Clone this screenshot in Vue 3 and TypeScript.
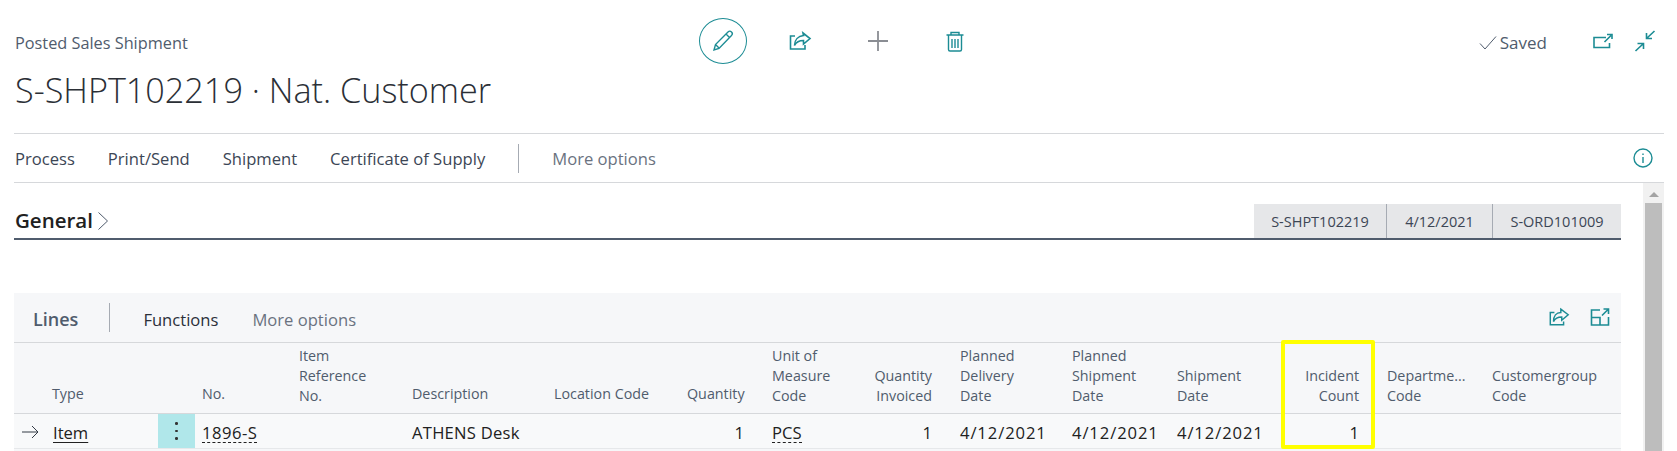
<script setup lang="ts">
interface Col { key: string; lines: string[]; right?: boolean; single?: boolean }
const columns: Col[] = [
  { key: 'type', lines: ['Type'], single: true },
  { key: 'menu', lines: [] },
  { key: 'no', lines: ['No.'], single: true },
  { key: 'ref', lines: ['Item', 'Reference', 'No.'] },
  { key: 'desc', lines: ['Description'], single: true },
  { key: 'loc', lines: ['Location Code'], single: true },
  { key: 'qty', lines: ['Quantity'], right: true, single: true },
  { key: 'unit', lines: ['Unit of', 'Measure', 'Code'] },
  { key: 'inv', lines: ['Quantity', 'Invoiced'], right: true },
  { key: 'pdd', lines: ['Planned', 'Delivery', 'Date'] },
  { key: 'psd', lines: ['Planned', 'Shipment', 'Date'] },
  { key: 'sd', lines: ['Shipment', 'Date'] },
  { key: 'inc', lines: ['Incident', 'Count'], right: true },
  { key: 'dept', lines: ['Departme...', 'Code'] },
  { key: 'cust', lines: ['Customergroup', 'Code'] },
]
const navItems = ['Process', 'Print/Send', 'Shipment', 'Certificate of Supply']
const tags = ['S-SHPT102219', '4/12/2021', 'S-ORD101009']
</script>

<template>
  <div class="page">
    <header class="top">
      <div class="heading">
        <div class="sub">Posted Sales Shipment</div>
        <h1 class="title">S-SHPT102219 · Nat. Customer</h1>
      </div>
      <div class="actions">
        <div class="act">
          <div class="circle">
            <svg width="24" height="24" viewBox="0 0 24 24" class="teal"><path d="M3 21l1.500-5.500L17 3c1-1 2.500-1 3.500 0s1 2.500 0 3.500L8 19.500 3 21zM4.500 15.500l4 4M15 5l4 4"/></svg>
          </div>
        </div>
        <div class="act">
          <svg width="24" height="24" viewBox="0 0 24 24" class="teal bold"><path d="M7 7H2.500V20H17v-4"/><path d="M15 4l7 5.500-6.500 5.500v-3.500c-4 0-7 1-9 5 0-6 4-9.500 9-10z"/></svg>
        </div>
        <div class="act">
          <svg width="24" height="24" viewBox="0 0 24 24" class="grey"><path d="M12 2v20M2 12h20"/></svg>
        </div>
        <div class="act">
          <svg width="24" height="24" viewBox="0 0 24 24" class="teal"><path d="M3.500 6h17M8 6V3.500h8V6M5.500 6v14.500c0 .8.500 1.500 1.500 1.500h10c1 0 1.500-.7 1.500-1.500V6M9 10v9M12 10v9M15 10v9"/></svg>
        </div>
      </div>
      <div class="status">
        <svg width="18" height="16" viewBox="0 0 18 16" class="thin"><path d="M1 8.500l5 5.500L17 1.500"/></svg>
        <span class="saved">Saved</span>
        <svg width="20" height="16" viewBox="0 0 20 16" class="teal bold st-a"><path d="M13 4.500H1v10h15.500V10M11.500 9L18 2.500M14 1.500h5V6"/></svg>
        <svg width="22" height="22" viewBox="0 0 22 22" class="teal bold st-b"><path d="M20.500 1L12.500 8.500M12.500 3v5.500H18M1.500 21L9.500 13.500M3.500 13.500h6V19"/></svg>
      </div>
    </header>

    <nav class="nav">
      <span v-for="n in navItems" :key="n" class="nav-item">{{ n }}</span>
      <span class="nav-sep"></span>
      <span class="nav-more">More options</span>
      <svg class="info teal" width="20" height="20" viewBox="0 0 20 20"><circle cx="10" cy="10" r="9"/><path d="M10 9v6M10 5.500v1.500"/></svg>
    </nav>

    <div class="body">
      <main class="content">
        <section class="general">
          <h2 class="gen-title">General</h2>
          <svg width="12" height="20" viewBox="0 0 12 20" class="thin chev"><path d="M1.500 1.500L10.500 10 1.500 18.500"/></svg>
          <div class="tags">
            <span v-for="t in tags" :key="t" class="tag">{{ t }}</span>
          </div>
        </section>

        <section class="lines">
          <div class="lines-bar">
            <span class="lines-title">Lines</span>
            <span class="lines-sep"></span>
            <span class="lines-fn">Functions</span>
            <span class="lines-more">More options</span>
            <svg class="teal bold bar-i1" width="22" height="22" viewBox="0 0 24 24"><path d="M7 7H2.500V20.500H17V17"/><path d="M14 3.500l8 6-7 6v-3.500c-4 0-7 1-9 5 0-6 3-10 8-10z"/></svg>
            <svg class="teal bold bar-i2" width="20" height="18" viewBox="0 0 20 18"><path d="M10 2H1.500v15h17V9M1.500 9.500h8.500V17M12 7.500L18 1.500M13.500 1h5v5"/></svg>
          </div>
          <div class="row head">
            <div v-for="c in columns" :key="c.key" class="cell" :class="{ right: c.right, single: c.single }">
              <div v-for="l in c.lines" :key="l">{{ l }}</div>
            </div>
          </div>
          <div class="row data">
            <div class="cell type-cell">
              <svg width="18" height="14" viewBox="0 0 18 14" class="thin dark"><path d="M1 7h16M11 1l6 6-6 6"/></svg>
              <span class="link">Item</span>
            </div>
            <div class="menu-cell"><span class="dot"></span><span class="dot"></span><span class="dot"></span></div>
            <div class="cell"><span class="dash code">1896-S</span></div>
            <div class="cell"></div>
            <div class="cell wide">ATHENS Desk</div>
            <div class="cell"></div>
            <div class="cell right">1</div>
            <div class="cell"><span class="dash">PCS</span></div>
            <div class="cell right">1</div>
            <div class="cell date">4/12/2021</div>
            <div class="cell date">4/12/2021</div>
            <div class="cell date">4/12/2021</div>
            <div class="cell right">1</div>
            <div class="cell"></div>
            <div class="cell"></div>
          </div>
          <div class="marker"></div>
        </section>
      </main>
      <aside class="scroll">
        <span class="arrow"></span>
        <span class="thumb"></span>
      </aside>
    </div>
  </div>
</template>

<style>
html, body { background: #fff; }
</style>

<style scoped>
.page {
  width: 1677px;
  height: 451px;
  overflow: hidden;
  background: #fff;
  font-family: "Open Sans", "Noto Sans", sans-serif;
  color: #212121;
  position: relative;
}
svg { fill: none; stroke-width: 1.4; display: block; flex-shrink: 0; }
.teal { stroke: #1c8c94; }
.bold { stroke-width: 1.6; }
.grey { stroke: #8a8d93; stroke-width: 1.8; }
.thin { stroke: #505c6d; stroke-width: 1; }
.dark { stroke: #333a45; }

.top {
  height: 133px;
  margin: 0 13px 0 14px;
  display: flex;
  border-bottom: 1px solid #d6d8db;
}
.heading { width: 670px; padding-left: 1px; box-sizing: border-box; }
.sub { margin-top: 32px; font-size: 16.3px; line-height: 22px; color: #505c6d; }
.title { margin: 11px 0 0; font-size: 34.2px; line-height: 50px; font-weight: 300; color: #2b2f36; white-space: nowrap; }
.actions { display: flex; margin-top: 18px; height: 46px; }
.act { width: 77.5px; display: flex; align-items: center; justify-content: center; }
.circle {
  width: 48px; height: 46px; border: 1px solid #1c8c94; border-radius: 50%; flex-shrink: 0;
  box-sizing: border-box; display: flex; align-items: center; justify-content: center;
}
.status { margin-left: auto; margin-top: 32px; height: 22px; display: flex; align-items: center; padding-right: 8px; }
.saved { margin-left: 3px; margin-top: -2px; font-size: 17px; color: #505c6d; }
.st-a { margin-left: 46px; margin-top: -4px; }
.st-b { margin-left: 21px; margin-top: -4px; }

.nav {
  height: 47px;
  margin: 0 13px 0 14px;
  border-bottom: 1px solid #d6d8db;
  padding-top: 1px;
  display: flex;
  align-items: center;
  font-size: 16.6px;
  color: #3c4655;
}
.nav-item { margin-right: 33px; }
.nav-item:first-child { margin-left: 1px; }
.nav-sep { width: 1px; height: 29px; background: #a6abb3; margin-right: 33px; }
.nav-more { color: #6a7280; }
.info { margin-left: auto; margin-right: 11px; margin-top: -1px; }

.body { display: flex; height: 268px; }
.content { margin-left: 14px; width: 1607px; }

.general {
  height: 55px;
  border-bottom: 2px solid #505c6d;
  display: flex;
  align-items: flex-end;
}
.gen-title { margin: 0 0 4px 1px; font-size: 20.5px; line-height: 28px; font-weight: 600; color: #212121; }
.chev { margin: 0 0 7px 4px; }
.tags { margin-left: auto; display: flex; height: 34px; }
.tag {
  display: flex; align-items: center; justify-content: center;
  height: 34px; background: #e6e7e9; color: #3c4655; font-size: 14.5px;
  border-left: 1px solid #a6abb3;
}
.tag:nth-child(1) { width: 132px; border-left: 0; }
.tag:nth-child(2) { width: 105px; }
.tag:nth-child(3) { width: 128px; }

.lines { margin-top: 53px; background: #f6f7f9; position: relative; height: 158px; }
.lines-bar {
  height: 46px; padding-top: 3px; border-bottom: 1px solid #d6d8db;
  display: flex; align-items: center; font-size: 16.6px;
}
.lines-title { margin-left: 19px; font-weight: 600; font-size: 18px; color: #505c6d; }
.lines-sep { width: 1px; height: 29px; background: #a6abb3; margin-left: 31px; margin-right: 33px; margin-top: -4px; }
.lines-fn { color: #2b303a; }
.lines-more { margin-left: 34px; color: #6a7280; }
.bar-i1 { margin-left: auto; margin-top: -4px; }
.bar-i2 { margin-left: 20px; margin-right: 11px; margin-top: -4px; }

.row {
  display: grid;
  grid-template-columns: 144px 37px 97px 113px 142px 133px 85px 80px 108px 112px 105px 114px 96px 105px 136px;
}
.head {
  height: 63px; border-bottom: 1px solid #d6d8db;
  font-size: 14.3px; line-height: 20px; color: #505c6d; align-items: end; padding-bottom: 7px;
}
.cell { padding: 0 7px; white-space: nowrap; }
.head .cell:first-child { padding-left: 38px; }
.head .single { padding-bottom: 2px; }
.right { text-align: right; padding-right: 21px; }
.data {
  height: 34px; border-bottom: 1px solid #e6e8ea; align-items: center;
  font-size: 16.6px; color: #212121; background: #f8f9fa;
}
.data .cell { padding-top: 2px; }
.type-cell { display: flex; align-items: center; padding-left: 7px; }
.link { margin-left: 14px; color: #212121; text-decoration: underline; text-underline-offset: 3px; }
.menu-cell {
  height: 34px; background: #b0e7ea;
  display: flex; flex-direction: column; align-items: center; justify-content: center; gap: 5px;
}
.dot { width: 2.5px; height: 2.5px; border-radius: 50%; background: #333; }
.dash { border-bottom: 1px dashed #212121; line-height: 19px; display: inline-block; }
.code { letter-spacing: 0.5px; }
.date { letter-spacing: 0.9px; }
.wide { letter-spacing: 0.25px; }

.marker {
  position: absolute; left: 1267px; top: 47px; width: 94px; height: 109px;
  border: 4px solid #ffff00; box-sizing: border-box; border-radius: 2px;
}

.scroll {
  margin-left: 22px; width: 21px; background: #f1f1f1;
  display: flex; flex-direction: column; align-items: center;
}
.arrow {
  margin-top: 9px; width: 0; height: 0;
  border-left: 5px solid transparent; border-right: 5px solid transparent; border-bottom: 5px solid #a3a3a3;
}
.thumb { margin-top: 6px; width: 17px; flex: 1; background: #bdbdbd; }
</style>
